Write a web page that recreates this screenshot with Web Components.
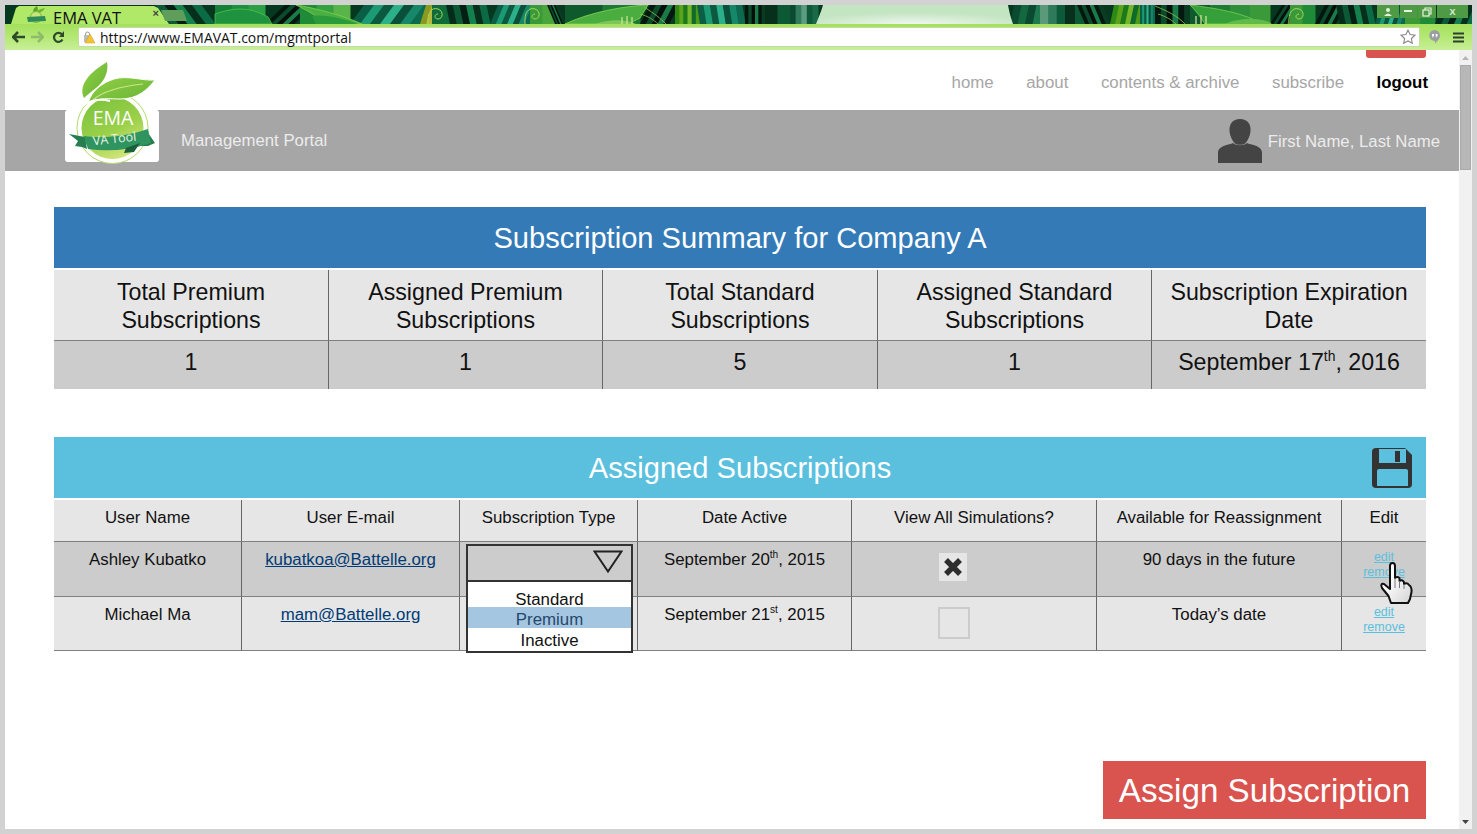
<!DOCTYPE html>
<html lang="en">
<head>
<meta charset="utf-8">
<title>EMA VAT</title>
<style>
  html, body { margin: 0; height: 100%; background: #d2d2d2; overflow: hidden; }
  body { font-family: "Liberation Sans", Arial, sans-serif; }
  #app { display: flex; flex-direction: column; height: 824px; width: 1467px; margin: 5px; background: #fff; }
  main-page { flex: 1; min-height: 0; }
  sup { font-size: .6em; line-height: 0; }
</style>
</head>
<body>
<div id="app">
  <browser-chrome url="https://www.EMAVAT.com/mgmtportal" tab="EMA VAT"></browser-chrome>
  <main-page>
    <site-header slot="header" user="First Name, Last Name" portal="Management Portal"></site-header>

    <section-banner color="#337ab7" style="margin-top:36px">Subscription Summary for Company A</section-banner>
    <data-grid columns="275px 274px 275px 274px 274px" size="23.2px" line="28px">
      <data-cell tone="head" pad="8px" height="71px">Total Premium<br>Subscriptions</data-cell>
      <data-cell tone="head" pad="8px" height="71px">Assigned Premium<br>Subscriptions</data-cell>
      <data-cell tone="head" pad="8px" height="71px">Total Standard<br>Subscriptions</data-cell>
      <data-cell tone="head" pad="8px" height="71px">Assigned Standard<br>Subscriptions</data-cell>
      <data-cell tone="head" pad="8px" height="71px" last>Subscription Expiration<br>Date</data-cell>
      <data-cell tone="shade" pad="7px" height="48px" flat>1</data-cell>
      <data-cell tone="shade" pad="7px" height="48px" flat>1</data-cell>
      <data-cell tone="shade" pad="7px" height="48px" flat>5</data-cell>
      <data-cell tone="shade" pad="7px" height="48px" flat>1</data-cell>
      <data-cell tone="shade" pad="7px" height="48px" flat last>September 17<sup>th</sup>, 2016</data-cell>
    </data-grid>

    <section-banner color="#5bc0de" style="margin-top:48px">
      Assigned Subscriptions
      <save-icon slot="action"></save-icon>
    </section-banner>
    <data-grid columns="188px 218px 178px 214px 245px 245px 84px" size="16.85px" line="20px">
      <data-cell tone="head" pad="8px" height="42px">User Name</data-cell>
      <data-cell tone="head" pad="8px" height="42px">User E-mail</data-cell>
      <data-cell tone="head" pad="8px" height="42px">Subscription Type</data-cell>
      <data-cell tone="head" pad="8px" height="42px">Date Active</data-cell>
      <data-cell tone="head" pad="8px" height="42px">View All Simulations?</data-cell>
      <data-cell tone="head" pad="8px" height="42px">Available for Reassignment</data-cell>
      <data-cell tone="head" pad="8px" height="42px" last>Edit</data-cell>

      <data-cell tone="shade" pad="8px" height="55px">Ashley Kubatko</data-cell>
      <data-cell tone="shade" pad="8px" height="55px"><mail-link>kubatkoa@Battelle.org</mail-link></data-cell>
      <data-cell tone="shade" pad="0" height="55px"><type-dropdown></type-dropdown></data-cell>
      <data-cell tone="shade" pad="8px" height="55px">September 20<sup>th</sup>, 2015</data-cell>
      <data-cell tone="shade" pad="11px" height="55px" align="left"><check-box checked></check-box></data-cell>
      <data-cell tone="shade" pad="8px" height="55px">90 days in the future</data-cell>
      <data-cell tone="shade" pad="9px" height="55px" last><edit-links></edit-links><hand-cursor></hand-cursor></data-cell>

      <data-cell tone="plain" pad="8px" height="54px">Michael Ma</data-cell>
      <data-cell tone="plain" pad="8px" height="54px"><mail-link>mam@Battelle.org</mail-link></data-cell>
      <data-cell tone="plain" pad="0" height="54px"></data-cell>
      <data-cell tone="plain" pad="8px" height="54px">September 21<sup>st</sup>, 2015</data-cell>
      <data-cell tone="plain" pad="10px" height="54px" align="left"><check-box></check-box></data-cell>
      <data-cell tone="plain" pad="8px" height="54px">Today’s date</data-cell>
      <data-cell tone="plain" pad="9px" height="54px" last><edit-links></edit-links></data-cell>
    </data-grid>

    <assign-button>Assign Subscription</assign-button>
  </main-page>
</div>

<script>
// Leaf wallpaper of the browser frame: slanted stripe bands, then big leaves on top
function band(x, w, skew, colors) {
  const sw = w / colors.length;
  return colors.map((c, i) => {
    const a = x + i * sw, b = a + sw + .5;
    return `<polygon points="${a + skew},5 ${b + skew},5 ${b},24 ${a},24" fill="${c}"/>`;
  }).join('');
}

function leaf(d, fill, edge) {
  return `<path d="${d}" fill="${fill}" stroke="${edge || 'none'}" stroke-width=".8"/>`;
}

function swirl(x) {
  return `<path d="M${x - 8} 24C${x - 9} 12 ${x - 4} 7 ${x + 2} 9 ${x + 8} 11 ${x + 7} 19 ${x + 2} 19 ${x - 2} 19 ${x - 2} 14 ${x + 2} 14" fill="none" stroke="#a5d65a" stroke-width="1"/>`;
}

function wallpaper() {
  const dark = ['#052c1a', '#0c5a35', '#031f13', '#13804e', '#062f1c', '#0a6b44'];
  const teal = ['#0a5e45', '#1b9a74', '#0b5a40', '#2bb08a', '#0a4f3a', '#17876a', '#0c6a4e'];
  const grass = ['#2d8a12', '#5aa31a', '#1d7a18', '#74b52a', '#0f6b2a', '#4c9a18'];
  const black = ['#02170e', '#0c4a2c', '#020f0a', '#1a7a48', '#03190f', '#0a3c24'];
  let s = '';
  const bands = [
    [160, 55, -14, dark], [215, 50, 0, ['#14803a', '#1d8f40', '#2aa046']], [265, 35, 20, black],
    [300, 50, 0, ['#1f8a38', '#34a040', '#58b54a']], [350, 70, 14, teal], [420, 12, 6, ['#8a9a20', '#b4b93a']],
    [432, 18, 0, ['#0f6b3a']], [450, 40, -4, dark], [490, 40, 8, teal], [530, 25, 0, ['#3a9a3a', '#4aa63c']],
    [555, 10, -8, black], [565, 75, 0, ['#0e5a2c', '#1b7a34']], [640, 35, 10, black], [675, 25, 0, grass],
    [700, 45, -3, teal], [745, 20, 0, black], [765, 25, 0, ['#062f1c', '#0c5a35']],
    [790, 28, 0, ['#0a4a30', '#2f7a5a', '#5c9c80', '#0c5a3a', '#1a6a48']],
    [1010, 30, 4, ['#0a4a30', '#14683f', '#0a4a30', '#1e7a4e']], [1040, 25, 0, ['#5a9a7a', '#2f7a5a', '#0c5a3a']],
    [1065, 20, 0, ['#062f1c', '#0c5a35']], [1085, 25, -8, black], [1110, 30, 4, grass], [1140, 15, 0, teal],
    [1155, 35, 0, black], [1190, 60, 0, ['#0e5a2c', '#1b7a34', '#2d8f3a']], [1250, 20, 0, ['#3a9a3a']],
    [1270, 20, 12, black], [1290, 25, 0, ['#3a9a3a', '#1f8a38']], [1315, 25, 10, black], [1340, 35, -4, dark],
    [1375, 30, 6, teal], [1405, 30, 0, ['#3d9a35', '#1f8a38']], [1435, 38, 8, dark]
  ];
  for (const b of bands) s += band(...b);
  s += leaf('M215 14C235 7 250 7 268 17 L272 24 H215Z', '#1f9240', '#53c24a');
  s += leaf('M296 5C315 8 345 16 362 24 H325C318 16 306 10 296 5Z', '#4bb044', '#7fd04a');
  s += leaf('M312 16C325 14 345 19 358 24H316Z', '#2a9a3a');
  s += leaf('M565 24C590 12 625 6 648 5L640 18 628 24Z', '#49ad40', '#8ad44f');
  s += leaf('M595 24C610 19 625 19 636 24Z', '#7ec65a');
  s += leaf('M1190 5C1215 8 1245 13 1262 24H1205C1200 16 1195 10 1190 5Z', '#35a03a', '#79cf4c');
  s += leaf('M1225 24C1240 17 1265 18 1272 24Z', '#63ba4c');
  s += '<path d="M644 7 C655 14 660 18 666 24M640 14C648 16 654 20 658 24M1155 6C1165 10 1178 16 1185 24M1158 14C1165 16 1172 20 1176 24" fill="none" stroke="#8bc34a" stroke-width=".8"/>';
  s += '<path d="M622 24V17M627 24V16M632 24V17M1196 24V16M1201 24V15M1206 24V16" stroke="#d5e6a0" stroke-width="1.2"/>';
  s += swirl(436) + swirl(533) + swirl(1297);
  return s;
}

class BrowserChrome extends HTMLElement {
  constructor() {
    super();
    this.attachShadow({ mode: 'open' });
    this.shadowRoot.innerHTML = `
    <style>
      :host { display: block; height: 45px; font-family: "Open Sans", sans-serif; color: #111; }
      .frame { height: 19px; position: relative; background: #06381f; }
      .frame > svg.paper { display: block; }
      .tabs { position: absolute; inset: 0; display: flex; align-items: flex-end; }
      .tab { height: 18px; margin-left: 6px; isolation: isolate;
        display: flex; align-items: center; width: 159px; font-size: 16.5px; line-height: 16px; box-sizing: border-box; padding: 5px 0 0 42px; position: relative; }
      .tab::before { content: ''; position: absolute; inset: 0; z-index: -1; background: #b0e868;
        clip-path: polygon(0 100%, 5px 2px, 8px 0, 143px 0, 147px 2px, 158px 100%); }
      .tab .x { font-size: 11px; color: #444; margin-left: auto; margin-right: 11px; margin-top: -9px; font-weight: 700; font-family: "Liberation Sans", sans-serif; }
      .tab svg { position: absolute; left: 14px; top: 0; }
      .new-tab { width: 22px; height: 11px; background: #5f9e5a; margin-left: -7px; margin-bottom: 3px; transform: skewX(20deg); border-radius: 1px; }
      .win { position: absolute; right: 4px; top: 0; height: 13px; display: flex; gap: 1px; }
      .win span { height: 13px; background: #4f9a45; color: #dfeedd; font: 700 9px/12px "Liberation Sans", sans-serif; text-align: center; display: flex; align-items: center; justify-content: center; }
      .bar { height: 26px; box-sizing: border-box; background: linear-gradient(#a4e05c, #b4e874 50%, #c8ef98); display: flex; align-items: center; padding: 2px 0 2px 7px; }
      .nav { display: flex; gap: 6px; align-items: center; width: 66px; flex: none; }
      .url { flex: none; width: 1342px; height: 20px; box-sizing: border-box; background: #fff; border: 1px solid #c3dba7; border-radius: 2px; display: flex; align-items: center; padding: 0 3px 0 4px; font-size: 13.95px; line-height: 17px; white-space: nowrap; }
      .url svg:first-child { margin-right: 5px; flex: none; }
      .url .star { margin-left: auto; }
      .tools { display: flex; align-items: center; gap: 12px; margin-left: 8px; }
    </style>
    <div class="frame">
      <svg class="paper" width="1467" height="19" viewBox="5 5 1467 19" xmlns="http://www.w3.org/2000/svg">
        <defs>
          <radialGradient id="glow" cx=".5" cy="1" r=".6"><stop offset="0" stop-color="#f0f7ee"/><stop offset="1" stop-color="#c3e5c2"/></radialGradient>
        </defs>
        <rect x="0" y="0" width="1477" height="30" fill="#06381f"/>
        ${wallpaper()}
        <path d="M816 24 C820 14 822 9 823 5 H1008 C1009 10 1010 16 1013 24 Z" fill="url(#glow)"/>
      </svg>
      <div class="tabs">
        <div class="tab">${this.getAttribute('tab')}<span class="x">×</span>
          <svg width="22" height="18" viewBox="0 0 22 18"><path d="M12 0C14 4 12 6 9 7 7 4 9 2 12 0Z" fill="#5aa52a"/><path d="M20 2C16 3 13 3 10 7 14 8 18 6 20 2Z" fill="#6fb534"/><circle cx="11" cy="11" r="5.5" fill="#c6e67a" stroke="#7ab83a"/><path d="M2 11 20 10 21 15 3 16Z" fill="#2e8b57"/></svg>
        </div>
        <div class="new-tab"></div>
      </div>
      <div class="win">
        <span style="width:22px"><svg width="12" height="10" viewBox="0 0 12 10"><circle cx="6" cy="3" r="2" fill="#e6f2e0"/><path d="M2 9 Q6 4 10 9Z" fill="#e6f2e0"/></svg></span>
        <span style="width:17px"><svg width="9" height="3"><rect width="8" height="2" fill="#e6f2e0"/></svg></span>
        <span style="width:18px"><svg width="10" height="10" viewBox="0 0 10 10" fill="none" stroke="#e6f2e0" stroke-width="1.2"><rect x="1" y="3" width="6" height="6"/><path d="M3 3V1H9V7H7"/></svg></span>
        <span style="width:31px">X</span>
      </div>
    </div>
    <div class="bar">
      <div class="nav">
        <svg width="13" height="12" viewBox="0 0 13 12"><path d="M6 1 1 6l5 5M1.5 6H13" stroke="#2f4a2b" stroke-width="2.6" fill="none"/></svg>
        <svg width="13" height="12" viewBox="0 0 13 12"><path d="M7 1l5 5-5 5M11.5 6H0" stroke="#8fbb6a" stroke-width="2.6" fill="none"/></svg>
        <svg width="13" height="13" viewBox="0 0 13 13" style="margin-left:2px"><path d="M10.5 8.5A4.5 4.5 0 1 1 10 3.5" stroke="#2f4a2b" stroke-width="2.2" fill="none"/><path d="M12 0v6H7z" fill="#2f4a2b"/></svg>
      </div>
      <div class="url">
        <svg width="12" height="13" viewBox="0 0 12 13"><rect x="1" y="4" width="7" height="7" fill="#bbb"/><path d="M2.5 4V3a2 2 0 0 1 4 0v1" fill="none" stroke="#999"/><path d="M7 3 12 12H2z" fill="#f4c430" stroke="#c99a10" stroke-width=".5"/></svg>
        <span>${this.getAttribute('url')}</span>
        <svg class="star" width="16" height="16" viewBox="0 0 16 16"><path d="M8 1.2l2.1 4.4 4.8.6-3.5 3.3.9 4.8L8 11.9l-4.3 2.4.9-4.800L1.100 6.200l4.800-.6z" fill="#fff" stroke="#888" stroke-width="1.1"/></svg>
      </div>
      <div class="tools">
        <svg width="13" height="16" viewBox="0 0 13 16"><path d="M6.5 1a5.5 5.5 0 0 1 5.5 5.5c0 3-2.5 5.5-5 8V12A5.5 5.5 0 0 1 6.5 1z" fill="#9a9ea0"/><path d="M4 5h2v2.5H5L4.5 9M7.5 5h2v2.5h-1L8 9" fill="#fff"/></svg>
        <svg width="11" height="11" viewBox="0 0 11 11"><path d="M0 1.5h11M0 5.5h11M0 9.5h11" stroke="#2f3f2f" stroke-width="2.2"/></svg>
      </div>
    </div>`;
  }
}
customElements.define('browser-chrome', BrowserChrome);

class MainPage extends HTMLElement {
  constructor() {
    super();
    this.attachShadow({ mode: 'open' });
    this.shadowRoot.innerHTML = `
    <style>
      :host { display: flex; background: #fff; overflow: hidden; font-family: "Liberation Sans", Arial, sans-serif; }
      .page { flex: 1; min-width: 0; display: flex; flex-direction: column; }
      .content { display: flex; flex-direction: column; padding: 0 33px 0 49px; flex: 1; }
      .scrollbar { width: 13px; background: #f1f1f1; display: flex; flex-direction: column; align-items: center; flex: none; }
      .arrow { height: 15px; display: flex; align-items: center; justify-content: center; flex: none; }
      .thumb { width: 11px; height: 105px; background: #b7b7b7; border: 1px solid #aaa; box-sizing: border-box; }
      .fill { flex: 1; }
    </style>
    <div class="page">
      <slot name="header"></slot>
      <div class="content"><slot></slot></div>
    </div>
    <div class="scrollbar">
      <div class="arrow"><svg width="7" height="4"><path d="M3.5 0 7 4H0z" fill="#b5b5b5"/></svg></div>
      <div class="thumb"></div>
      <div class="fill"></div>
      <div class="arrow"><svg width="7" height="4"><path d="M0 0h7L3.5 4z" fill="#444"/></svg></div>
    </div>`;
  }
}
customElements.define('main-page', MainPage);

class SiteHeader extends HTMLElement {
  constructor() {
    super();
    this.attachShadow({ mode: 'open' });
    this.shadowRoot.innerHTML = `
    <style>
      :host { display: block; position: relative; }
      .top { height: 60px; box-sizing: border-box; display: flex; justify-content: flex-end; align-items: center; gap: 32.5px; padding: 6px 31px 0 0; font-size: 16.85px; color: #a6a6a6; position: relative; }
      .top b { color: #000; }
      .flag { position: absolute; right: 33px; top: 0; width: 60px; height: 8px; background: #d9534f; border-radius: 0 0 3px 3px; }
      .band { height: 61px; background: #a6a6a6; color: #ececec; display: flex; align-items: center; font-size: 16.75px; padding: 0 19px 0 176px; }
      .user { margin-left: auto; display: flex; align-items: center; gap: 6px; padding-top: 1px; }
      .user span { margin-top: 1px; }
      .logo { position: absolute; left: 57px; top: 10px; }
    </style>
    <div class="top">
      <div class="flag"></div>
      <span>home</span><span>about</span><span>contents &amp; archive</span><span>subscribe</span><b>logout</b>
    </div>
    <div class="band">
      <span>${this.getAttribute('portal')}</span>
      <div class="user">
        <svg width="44" height="44" viewBox="0 0 44 44"><path d="M22 0c7.5 0 11 5 10.5 12-.4 5.5-3.5 11-6 13-1.5 1-7.5 1-9 0-2.5-2-5.600-7.500-6-13C11 5 14.5 0 22 0z" fill="#444"/><path d="M0 44V34c0-4 3-6 7-7.5 3-1.100 6-1.500 8-2.500 3 3 11 3 14 0 2 1 5 1.400 8 2.500 4 1.500 7 3.500 7 7.500v10z" fill="#444"/></svg>
        <span>${this.getAttribute('user')}</span>
      </div>
    </div>
    <svg class="logo" width="100" height="105" viewBox="62 60 100 105" xmlns="http://www.w3.org/2000/svg">
      <defs>
        <linearGradient id="g" x1=".2" y1="0" x2=".7" y2="1"><stop offset="0" stop-color="#7cc23c"/><stop offset=".55" stop-color="#9bd04a"/><stop offset="1" stop-color="#d6e87e"/></linearGradient>
        <linearGradient id="l" x1="0" y1="0" x2="1" y2="1"><stop offset="0" stop-color="#92cf45"/><stop offset="1" stop-color="#66b334"/></linearGradient>
      </defs>
      <rect x="65" y="110" width="94" height="52" rx="3" fill="#fff"/>
      <circle cx="112.5" cy="128" r="35.5" fill="#fff" stroke="#b3da6a" stroke-width="1"/>
      <circle cx="112.5" cy="128" r="31" fill="url(#g)"/>
      <path d="M107 62C109 72 104 82 96 88 91 92 87 95 84 98 78 85 90 72 107 62Z" fill="url(#l)"/>
      <path d="M155 80C142 81 128 75 114 79 102 83 92 90 88 103 99 97 110 99 120 99 138 99 147 90 155 80Z" fill="url(#l)" stroke="#fff" stroke-width="1"/>
      <path d="M93 100C104 90 124 86 143 84" stroke="#c8e68c" stroke-width="1.2" fill="none"/>
      <path d="M80 108C88 100 100 98 110 101" stroke="#fff" stroke-width="2" fill="none"/>
      <text x="113" y="125" text-anchor="middle" font-family="Open Sans, sans-serif" font-size="19.5" fill="#fff">EMA</text>
      <path d="M69 134 85 137 87 149 82 147 75 146 78 141Z" fill="#267e50"/>
      <path d="M146 130 155 143 148 146 136 146Z" fill="#267e50"/>
      <path d="M84 136C103 139 128 136 148 129L151 143C130 150 108 152 88 149Z" fill="#2f9460"/>
      <path d="M126 148 140 143 134 152 124 153Z" fill="#1c5f3b"/>
      <text transform="translate(115 143) rotate(-6)" text-anchor="middle" font-family="Open Sans, sans-serif" font-size="12.5" fill="#e9f6e4">VA Tool</text>
    </svg>`;
  }
}
customElements.define('site-header', SiteHeader);

class SectionBanner extends HTMLElement {
  constructor() {
    super();
    this.attachShadow({ mode: 'open' });
    this.shadowRoot.innerHTML = `
    <style>
      :host { display: block; flex: none; }
      .banner { height: 61px; box-sizing: border-box; padding-top: 2px; position: relative; display: flex; align-items: center; justify-content: center; color: #fff; font-size: 29.1px; }
      ::slotted([slot=action]) { position: absolute; right: 14px; top: 11px; }
    </style>
    <div class="banner" style="background:${this.getAttribute('color')}">
      <span><slot></slot></span>
      <slot name="action"></slot>
    </div>`;
  }
}
customElements.define('section-banner', SectionBanner);

class DataGrid extends HTMLElement {
  constructor() {
    super();
    this.attachShadow({ mode: 'open' });
    this.shadowRoot.innerHTML = `
    <style>
      :host { display: block; flex: none; margin-top: 2px; }
      .grid { display: grid; grid-template-columns: ${this.getAttribute('columns')};
        font-size: ${this.getAttribute('size')}; line-height: ${this.getAttribute('line')}; color: #111; }
    </style>
    <div class="grid"><slot></slot></div>`;
  }
}
customElements.define('data-grid', DataGrid);

class DataCell extends HTMLElement {
  constructor() {
    super();
    this.attachShadow({ mode: 'open' });
    const bg = this.getAttribute('tone') === 'shade' ? '#cccccc' : '#e6e6e6';
    const left = this.getAttribute('align') === 'left';
    this.shadowRoot.innerHTML = `
    <style>
      :host { display: block; position: relative; box-sizing: border-box; background: ${bg};
        min-height: ${this.getAttribute('height')};
        border-right: ${this.hasAttribute('last') ? '0' : '1px solid #666'};
        border-bottom: ${this.hasAttribute('flat') ? '0' : '1px solid #808080'};
        padding: ${this.getAttribute('pad')} ${left ? '0 0 86px' : '4px 0'};
        text-align: ${left ? 'left' : 'center'}; }
    </style><slot></slot>`;
  }
}
customElements.define('data-cell', DataCell);

class MailLink extends HTMLElement {
  constructor() {
    super();
    this.attachShadow({ mode: 'open' });
    this.shadowRoot.innerHTML = `
    <style>:host { display: inline; color: #003a75; text-decoration: underline; }</style><slot></slot>`;
  }
}
customElements.define('mail-link', MailLink);

class TypeDropdown extends HTMLElement {
  constructor() {
    super();
    this.attachShadow({ mode: 'open' });
    this.shadowRoot.innerHTML = `
    <style>
      :host { display: block; position: absolute; left: 6px; top: 2px; width: 167px; height: 109px; z-index: 3; }
      .box { height: 100%; box-sizing: border-box; border: 2px solid #333; background: #fff; display: flex; flex-direction: column; }
      .head { height: 36px; flex: none; background: #ccc; border-bottom: 2px solid #333; display: flex; justify-content: flex-end; align-items: flex-start; padding: 4px 8px 0 0; box-sizing: border-box; }
      ul { list-style: none; margin: 7px 0 0; padding: 0; line-height: 20px; }
      li { height: 18px; box-sizing: border-box; padding-top: 1px; }
      .on { background: #a5c6e0; color: #24486b; height: 21px; padding-top: 3px; }
      .on + li { padding-top: 3px; height: 21px; }
    </style>
    <div class="box">
      <div class="head"><svg width="30" height="23" viewBox="0 0 30 23"><path d="M1.5 1.5H28.5L15 21.5Z" fill="none" stroke="#222" stroke-width="2"/></svg></div>
      <ul><li>Standard</li><li class="on">Premium</li><li>Inactive</li></ul>
    </div>`;
  }
}
customElements.define('type-dropdown', TypeDropdown);

class CheckBox extends HTMLElement {
  constructor() {
    super();
    this.attachShadow({ mode: 'open' });
    const on = this.hasAttribute('checked');
    this.shadowRoot.innerHTML = `
    <style>
      :host { display: block; box-sizing: border-box; background: #e6e6e6;
        width: ${on ? 28 : 32}px; height: ${on ? 28 : 32}px; margin-left: ${on ? 1 : 0}px; border: ${on ? 0 : '2px solid #ccc'}; }
      svg { display: block; }
    </style>
    ${on ? '<svg width="28" height="28" viewBox="0 0 28 28"><path d="M7 7 21 21M21 7 7 21" stroke="#2d2d2d" stroke-width="5.5"/></svg>' : ''}`;
  }
}
customElements.define('check-box', CheckBox);

class EditLinks extends HTMLElement {
  constructor() {
    super();
    this.attachShadow({ mode: 'open' });
    this.shadowRoot.innerHTML = `
    <style>:host { display: block; font-size: 12.5px; line-height: 15px; color: #5bc0de; text-decoration: underline; margin-top: -1px; }</style>
    edit<br>remove`;
  }
}
customElements.define('edit-links', EditLinks);

class HandCursor extends HTMLElement {
  constructor() {
    super();
    this.attachShadow({ mode: 'open' });
    this.shadowRoot.innerHTML = `
    <style>:host { display: block; position: absolute; left: 37px; top: 20px; width: 35px; height: 44px; z-index: 4; }</style>
    <svg width="35" height="44" viewBox="0 0 35 44" xmlns="http://www.w3.org/2000/svg">
      <defs><linearGradient id="h" x1="0" y1="0" x2="1" y2="1"><stop offset=".3" stop-color="#fff"/><stop offset="1" stop-color="#d4d4d4"/></linearGradient></defs>
      <path d="M11 4Q11 1 13.5 1 16 1 16 4V16Q18 14 20.5 16V19Q23 17 25 20V22Q28 20 30 23 33 25 32.5 30L31 37 29 41H12L9.5 34 3 26Q1 21 5 22L11 27Z" fill="url(#h)" stroke="#111" stroke-width="2" stroke-linejoin="round"/>
      <path d="M16 16V26M20.5 19V26M25 22V27" stroke="#777" stroke-width="1"/>
    </svg>`;
  }
}
customElements.define('hand-cursor', HandCursor);

class SaveIcon extends HTMLElement {
  constructor() {
    super();
    this.attachShadow({ mode: 'open' });
    this.shadowRoot.innerHTML = `
    <style>:host { display: block; width: 40px; height: 40px; } svg { display: block; }</style>
    <svg width="40" height="40" viewBox="0 0 40 40" xmlns="http://www.w3.org/2000/svg">
      <path d="M4 0H33L40 7V36Q40 40 36 40H4Q0 40 0 36V4Q0 0 4 0Z" fill="#333"/>
      <rect x="7" y="1" width="27" height="14" fill="#5bc0de"/>
      <rect x="23" y="3" width="5" height="11" fill="#333"/>
      <path d="M7 21H34Q36 21 36 23V38H5V23Q5 21 7 21Z" fill="#5bc0de"/>
    </svg>`;
  }
}
customElements.define('save-icon', SaveIcon);

class AssignButton extends HTMLElement {
  constructor() {
    super();
    this.attachShadow({ mode: 'open' });
    this.shadowRoot.innerHTML = `
    <style>
      :host { display: block; align-self: flex-end; margin-top: 110px; flex: none; }
      .btn { height: 58px; width: 323px; box-sizing: border-box; padding-top: 2px; background: #d9534f; color: #fff; font-size: 33.2px; display: flex; align-items: center; justify-content: center; }
    </style>
    <div class="btn"><slot></slot></div>`;
  }
}
customElements.define('assign-button', AssignButton);
</script>
</body>
</html>
